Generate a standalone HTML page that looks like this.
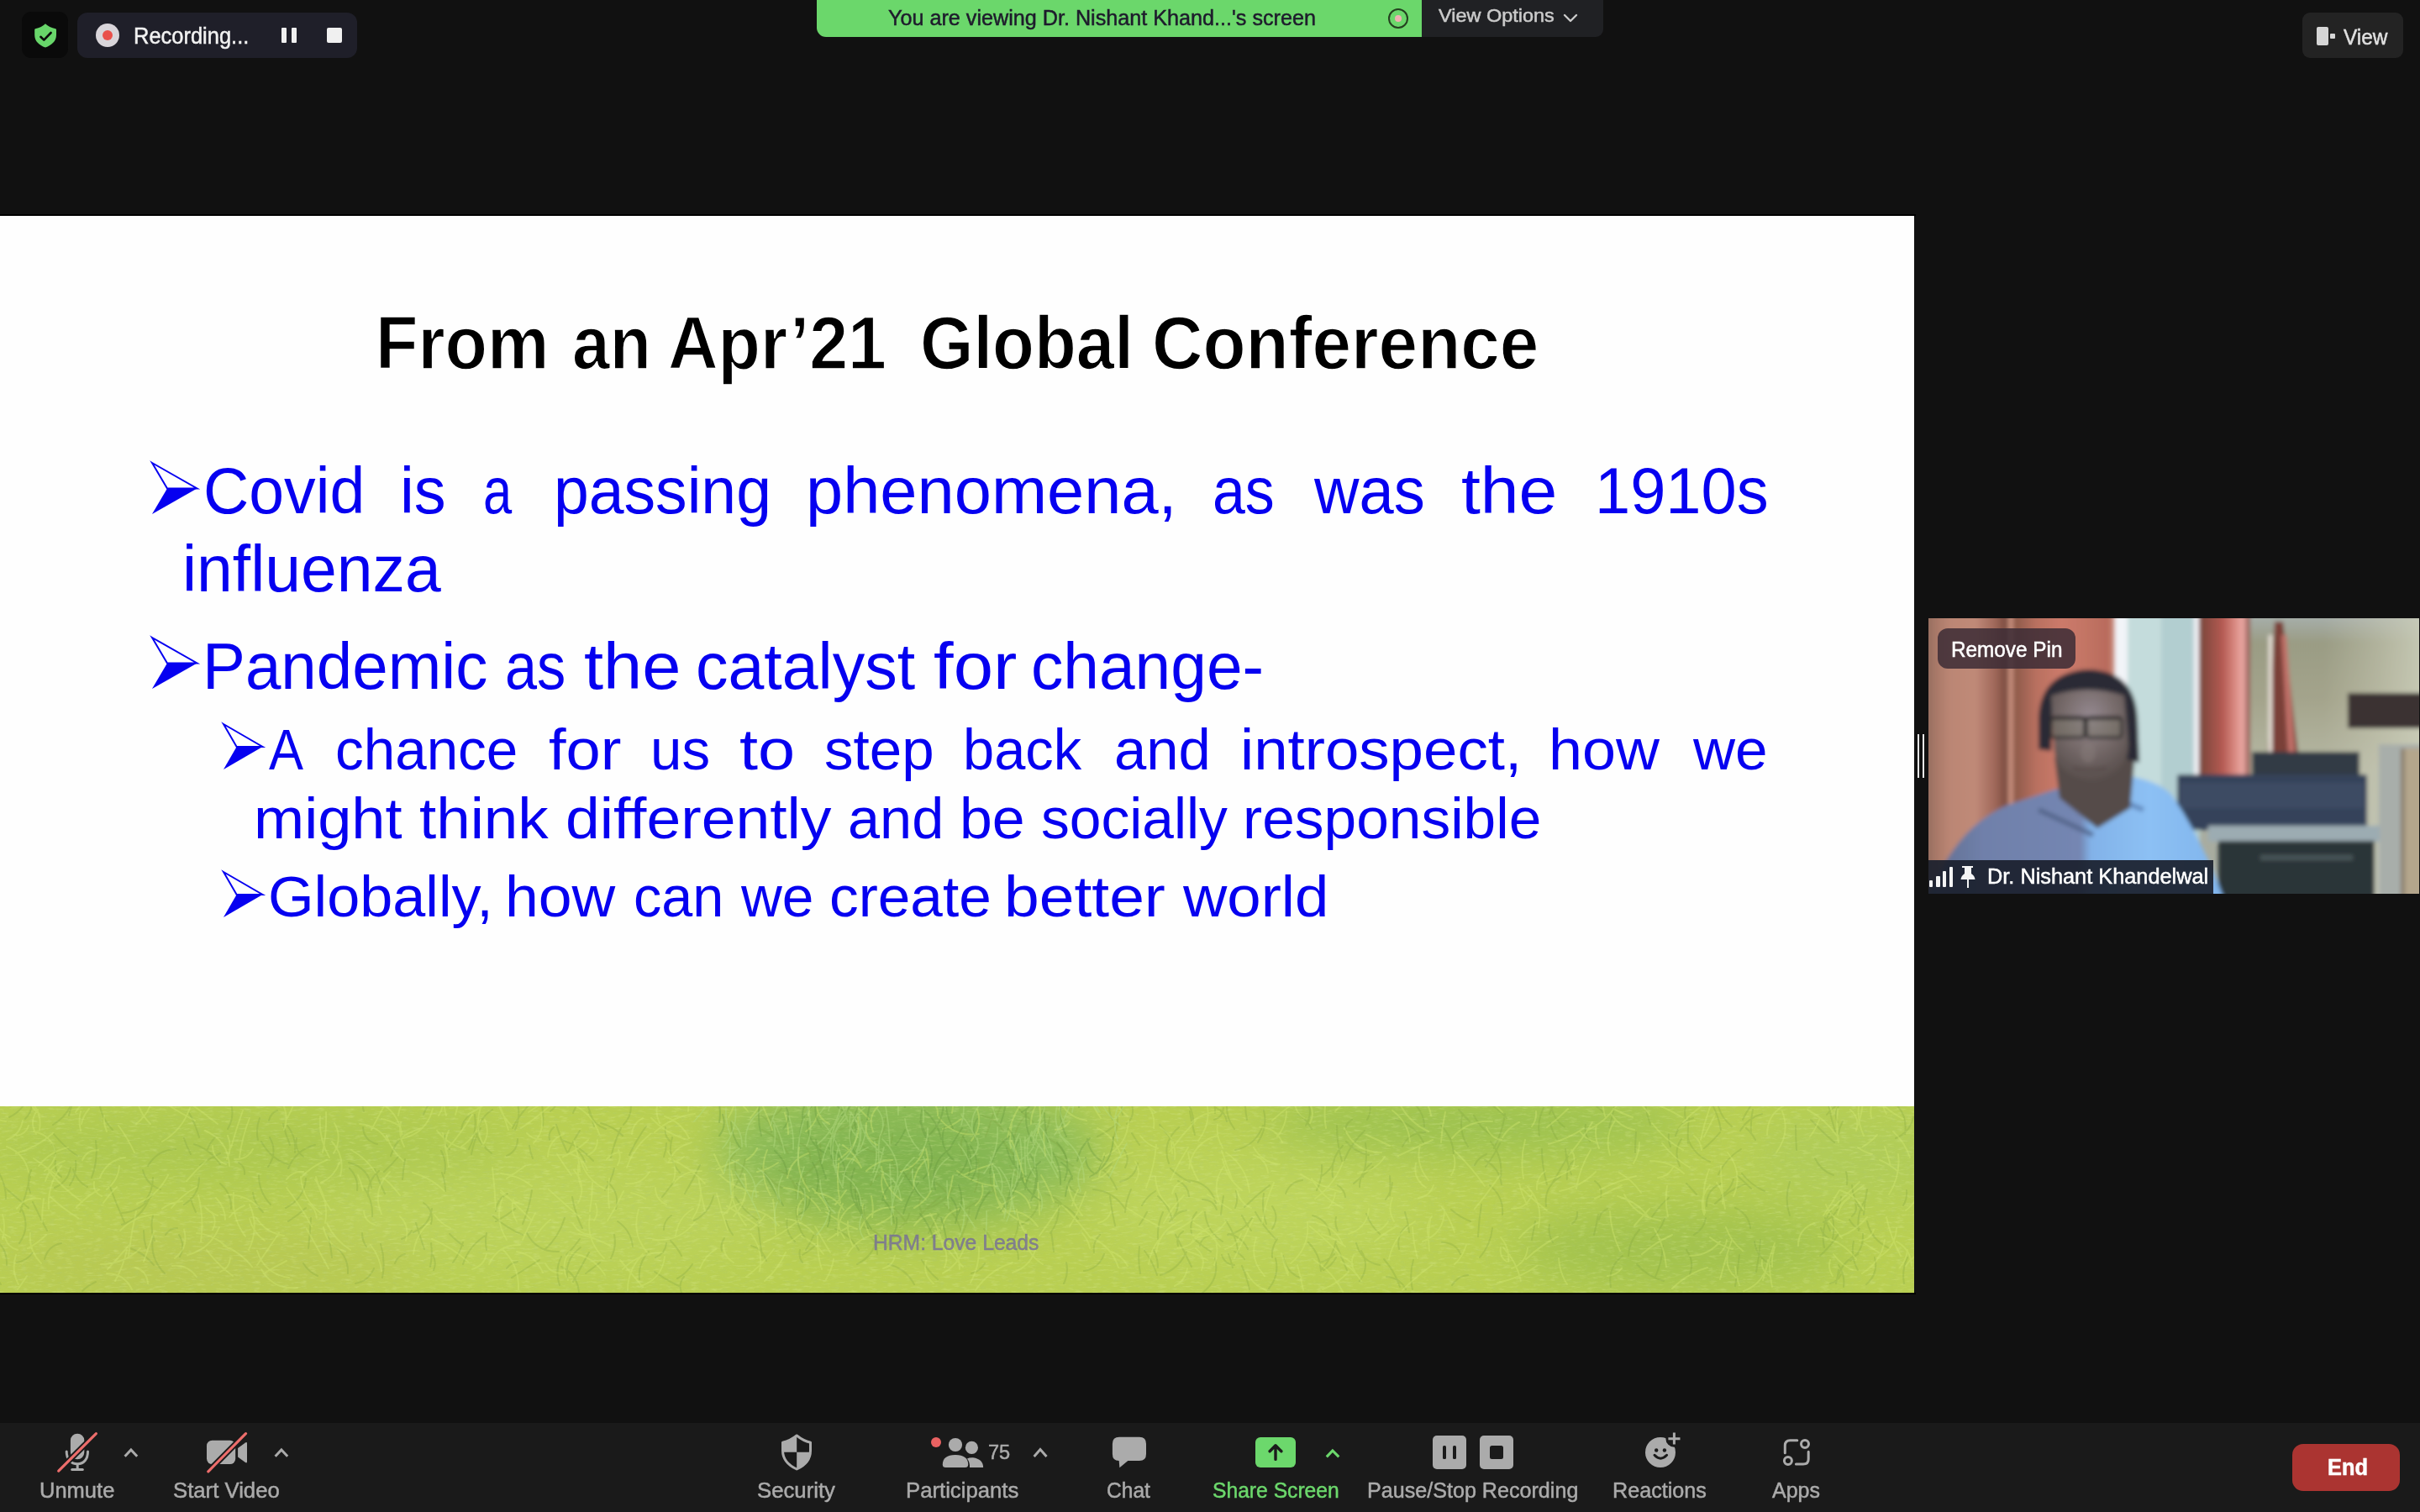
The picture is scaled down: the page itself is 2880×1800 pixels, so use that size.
<!DOCTYPE html>
<html><head><meta charset="utf-8">
<style>
html,body{margin:0;padding:0;width:2880px;height:1800px;overflow:hidden;background:#111111;}
*{box-sizing:border-box;}
body{font-family:"Liberation Sans",sans-serif;position:relative;}
.a{position:absolute;}
.t{position:absolute;white-space:nowrap;transform-origin:0 0;-webkit-text-stroke:0.5px currentColor;}
/* top bar */
#shieldbox{left:26px;top:14px;width:55px;height:55px;background:#0a0a0a;border-radius:11px;}
#recpill{left:92px;top:15px;width:333px;height:54px;background:#1f1f29;border-radius:12px;}
#banner{left:972px;top:0;width:720px;height:44px;background:#6bd76b;border-radius:0 0 0 11px;}
#viewopt{left:1692px;top:0;width:216px;height:44px;background:#202124;border-radius:0 0 9px 0;}
#viewbtn{left:2740px;top:15px;width:120px;height:54px;background:#232323;border-radius:9px;}
/* slide */
#slide{left:0;top:257px;width:2278px;height:1282px;background:#fefefe;overflow:hidden;}
#slideline{left:0;top:255px;width:2280px;height:2px;background:#000;}
#slidebot{left:0;top:1539px;width:2280px;height:2px;background:#000;}
.blue{color:#0a00f0;}
.w1,.w2,.tt{position:absolute;white-space:nowrap;transform-origin:0 0;color:#0600f0;}
.w1{font-size:77.5px;line-height:77.5px;}
.w2{font-size:68px;line-height:68px;}
.tt{font-size:88.5px;line-height:88.5px;font-weight:bold;color:#000;-webkit-text-stroke:1.5px #fefefe;paint-order:normal;}
/* toolbar */
#toolbar{left:0;top:1694px;width:2880px;height:106px;background:#1a1a1a;}
.lbl{color:#ababab;}
</style></head><body>

<!-- TOP BAR -->
<div class="a" id="shieldbox"></div>
<svg class="a" style="left:40px;top:28px" width="28" height="30" viewBox="0 0 28 30">
  <path d="M14 0.3 Q18.5 4.8 26.3 6.2 Q27 6.5 27 7.5 L27 13.5 C27 21 21.5 26 14 28.4 C6.5 26 1.2 21 1.2 13.5 L1.2 7.5 Q1.2 6.5 2 6.2 Q9.5 4.8 14 0.3 Z" fill="#68d66a"/>
  <path d="M8.4 15.8 L12.3 19.6 L20.6 11" stroke="#0b0b0b" stroke-width="2.6" fill="none" stroke-linecap="round" stroke-linejoin="round"/>
</svg>
<div class="a" id="recpill"></div>
<div class="a" style="left:114px;top:28px;width:28px;height:28px;border-radius:50%;background:#d9d5da;"></div>
<div class="a" style="left:122px;top:36px;width:12px;height:12px;border-radius:50%;background:#e9504b;"></div>
<div class="t" style="left:158.9px;top:29.3px;font-size:28px;line-height:28px;transform:scaleX(0.9097);color:#f2f2f2;">Recording...</div>
<div class="a" style="left:335px;top:33px;width:6px;height:18px;background:#f0f0f0;border-radius:1px;"></div>
<div class="a" style="left:347px;top:33px;width:6px;height:18px;background:#f0f0f0;border-radius:1px;"></div>
<div class="a" style="left:389px;top:33px;width:18px;height:18px;background:#f0f0f0;border-radius:2px;"></div>

<div class="a" id="banner"></div>
<div class="t" style="left:1057.0px;top:8.5px;font-size:25.5px;line-height:25.5px;transform:scaleX(0.9871);color:#1e1b2c;">You are viewing Dr. Nishant Khand...'s screen</div>
<div class="a" style="left:1652px;top:10px;width:24px;height:24px;border-radius:50%;border:2px solid #24401f;"></div>
<div class="a" style="left:1660px;top:18px;width:8px;height:8px;border-radius:50%;background:#f0b0b2;"></div>
<div class="a" id="viewopt"></div>
<div class="t" style="left:1712.2px;top:8.4px;font-size:22px;line-height:22px;transform:scaleX(1.0664);color:#cbcbcb;">View Options</div>
<svg class="a" style="left:1860px;top:16px" width="18" height="12" viewBox="0 0 18 12"><path d="M2 2 L9 9 L16 2" stroke="#cbcbcb" stroke-width="2.4" fill="none" stroke-linecap="round" stroke-linejoin="round"/></svg>

<div class="a" id="viewbtn"></div>
<div class="a" style="left:2757px;top:32px;width:14px;height:22px;background:#d6d6d6;border-radius:2px;"></div>
<div class="a" style="left:2773px;top:40px;width:6px;height:6px;background:#d6d6d6;border-radius:1px;"></div>
<div class="t" style="left:2788.7px;top:31.2px;font-size:26.5px;line-height:26.5px;transform:scaleX(0.9218);color:#e0e0e0;">View</div>

<!-- SLIDE -->
<div class="a" id="slideline"></div>
<div class="a" id="slide">
<svg class="a" style="left:0;top:1060px" width="2278" height="222" viewBox="0 0 2278 222">
  <defs>
   <filter id="gb" x="-20%" y="-50%" width="140%" height="200%"><feGaussianBlur stdDeviation="28"/></filter>
   <filter id="tex" x="0" y="0" width="100%" height="100%">
    <feTurbulence type="fractalNoise" baseFrequency="0.09 0.35" numOctaves="3" seed="7" result="n"/>
    <feColorMatrix in="n" type="matrix" values="0 0 0 0 0.75  0 0 0 0 0.88  0 0 0 0 0.35  0 0 0 2.2 -1.15" result="hl"/>
    <feTurbulence type="fractalNoise" baseFrequency="0.12 0.4" numOctaves="2" seed="21" result="n2"/>
    <feColorMatrix in="n2" type="matrix" values="0 0 0 0 0.42  0 0 0 0 0.58  0 0 0 0 0.2  0 0 0 2.2 -1.2" result="sd"/>
    <feMerge><feMergeNode in="sd"/><feMergeNode in="hl"/></feMerge>
   </filter>
  </defs>
  <rect x="0" y="0" width="2278" height="222" fill="#b9cf52"/>
  <g filter="url(#gb)">
   <ellipse cx="1080" cy="55" rx="230" ry="90" fill="#8cbc58"/>
   <ellipse cx="1060" cy="80" rx="150" ry="60" fill="#82b450"/>
   <ellipse cx="1760" cy="22" rx="260" ry="32" fill="#98c050"/>
   <ellipse cx="300" cy="50" rx="320" ry="40" fill="#acc850"/>
   <ellipse cx="650" cy="130" rx="280" ry="60" fill="#bcd25a"/>
   <ellipse cx="2000" cy="170" rx="200" ry="50" fill="#a2c24e"/>
   <ellipse cx="1500" cy="120" rx="200" ry="60" fill="#bed45c"/>
   <ellipse cx="250" cy="190" rx="260" ry="40" fill="#b8c852"/>
   <ellipse cx="2200" cy="60" rx="120" ry="50" fill="#b0cc58"/>
  </g>
  <rect x="0" y="0" width="2278" height="222" filter="url(#tex)" opacity="0.35"/>
  <g fill="none" stroke-linecap="round">
   <path d="M2178 211q9 -2 13 -11M1677 150q-1 -12 -5 -24M1324 39q7 -13 6 -27M2266 211q-3 -16 4 -31M82 11q3 -14 11 -27M2031 119q-1 -19 17 -27M741 35q-11 -11 -26 -15M414 199q1 -22 -18 -34M1738 176q-6 -14 -22 -14M367 169q2 -18 3 -36M1116 206q-12 -10 -19 -23M2011 200q6 -15 -4 -29M1649 111q7 -9 8 -20M378 202q-11 -5 -17 -15M2181 158q3 -15 -1 -30M1339 73q6 -11 -1 -21M1420 21q1 -23 -18 -35M436 167q-5 -7 -5 -16M516 195q4 -9 -1 -18M558 51q10 -19 7 -41M73 84q-9 -7 -7 -19M2174 10q12 -15 31 -20M1853 39q-6 -9 -8 -19M98 220q7 -7 16 -11M1402 166q-3 -11 6 -17M1022 171q-9 -17 -28 -25M1965 158q11 -10 16 -24M721 27q-15 -5 -20 -20M1333 90q18 -5 21 -22M590 137q12 -6 23 -15M320 17q2 -9 10 -12M1447 115q-8 -26 -35 -27M530 101q-0 -11 -4 -22M1823 159q2 -11 4 -22M11 13q13 -6 20 -19M549 27q2 -11 11 -17M1186 106q-8 -10 -7 -23M2065 214q3 -18 5 -37M1324 16q-7 -13 -1 -28M214 179q7 -13 -1 -26M1391 68q-9 -25 12 -43M1561 27q-6 -11 -16 -18M36 103q-5 -14 1 -27M1341 21q10 -9 6 -23M174 169q-3 -10 -3 -21M1055 169q5 -14 19 -19M183 189q-11 -14 -28 -20M56 148q-9 -17 -17 -34M815 104q10 -17 18 -34M1088 212q-10 -19 -31 -24M676 55q6 -14 14 -26M1547 204q-17 -7 -20 -26M811 222q-4 -11 3 -19M196 199q-18 -18 -14 -43M675 55q-8 -16 -13 -33M1194 29q-9 -14 -25 -18M219 117q18 -11 18 -32M1050 158q-9 -12 -23 -14M1306 36q13 -6 24 -16M2009 44q-1 -15 1 -30M1618 208q13 -17 2 -36M753 167q-2 -19 -18 -30M513 140q4 -16 -9 -25M1446 8q1 -16 -12 -26M1481 182q-5 -7 -12 -9M1381 201q22 -7 31 -28M1747 48q-11 -17 -7 -37M1832 35q-3 -17 5 -33M1290 106q-12 -1 -18 -12M7 110q0 -21 -13 -38M1105 151q6 -11 12 -22M63 22q17 -10 24 -29M1787 93q-3 -20 -20 -29M307 40q-3 -13 2 -26M24 126q7 -21 12 -42M871 101q12 -17 16 -38M1102 122q23 -6 33 -27M693 145q-9 -18 -12 -37M1915 25q5 -16 8 -33M1938 178q1 -18 13 -31M1042 55q-13 -2 -19 -13M1865 87q-2 -15 10 -24M1042 41q13 -10 12 -26M2100 101q-16 -7 -27 -21M227 57q-5 -9 -8 -19M811 178q-5 -10 -13 -18M912 184q-4 -14 -18 -18M1145 155q-4 -23 -21 -38M1980 208q-19 -5 -32 -20M1418 151q-3 -14 6 -25M2182 82q-15 -5 -22 -20M2188 33q1 -8 5 -15M2090 197q4 -19 5 -38M539 186q8 -11 12 -24M343 74q9 -22 32 -28M465 59q4 -13 14 -24M561 57q3 -17 11 -31M1749 18q-7 -7 -13 -14M1774 34q-13 -9 -20 -23M1750 137q-13 -5 -23 -14M1079 139q-7 -10 -16 -19M1339 122q-14 -21 -38 -23M1036 94q8 -16 25 -18M2267 33q4 -25 -16 -40M176 71q11 -19 33 -20M799 43q-9 -7 -7 -18M2213 146q-8 -3 -12 -11M1097 126q-6 -10 -0 -19M455 204q4 -20 -2 -40M1994 35q5 -16 21 -21M247 51q3 -8 9 -14M1418 191q-9 -19 -19 -38M2089 40q-4 -8 -11 -14M479 87q1 -12 3 -24M907 178q-3 -19 -5 -39M648 171q17 -15 24 -38M1592 148q-4 -8 -2 -16M443 131q1 -18 -9 -33M1601 108q-1 -9 -9 -14M1903 135q1 -9 10 -13M1448 123q-4 -12 -17 -12M2049 106q11 -7 14 -19M1597 65q-6 -20 -6 -42M946 161q-12 -11 -9 -27M1600 64q8 -20 24 -35M1226 90q-16 -5 -24 -19M1759 155q1 -19 4 -38M788 108q7 -9 14 -18M438 107q-1 -18 13 -30M1378 192q-0 -11 -5 -21M2016 153q12 -7 14 -20M682 8q8 -20 24 -33M727 61q4 -18 12 -35M955 186q-5 -7 -3 -15M343 137q11 -7 21 -16M2083 145q-2 -17 -18 -24M345 70q-23 -7 -34 -28M1603 195q-6 -15 -13 -30M535 51q-7 -6 -6 -16M1416 90q-13 -6 -23 -16M1082 87q6 -9 12 -18M1862 25q-20 -15 -16 -41M1611 92q11 -10 23 -20M1184 175q-2 -17 -13 -29M504 10q5 -16 21 -21M733 122q5 -19 -10 -32M233 126q-4 -8 -6 -16M319 72q12 -17 2 -35M809 79q-16 -18 -9 -42M1786 84q3 -23 -12 -42M2041 116q16 -16 37 -24M1908 7q-13 -13 -30 -18M1964 22q-5 -15 -7 -30M955 177q9 -5 16 -12M2202 184q16 -12 15 -32M92 59q-16 -11 -28 -26M2071 29q9 -15 26 -20M433 6q-4 -14 -0 -27M1484 16q-3 -15 -2 -30M2084 32q-1 -14 2 -28M2218 129q1 -15 4 -30M2166 178q13 -12 22 -26M291 81q1 -9 -7 -14M1453 129q1 -11 3 -22M964 63q1 -13 -11 -19M1871 140q7 -6 6 -14M2216 124q-11 -13 -12 -30M1622 84q6 -20 3 -40M1267 121q-9 -13 -23 -17M956 115q-6 -20 -21 -36M2184 30q-5 -16 -8 -32M2194 215q2 -14 -6 -26M1586 84q-3 -22 12 -37M1514 146q9 -14 0 -27M1841 93q-6 -21 -6 -42M1474 175q-3 -21 -15 -39M913 14q16 -3 21 -20M826 136q18 -9 23 -29M742 22q13 -14 7 -32M1013 25q6 -4 13 -9M1627 16q7 -12 1 -25M2211 195q-9 -16 -5 -34M1395 41q-7 -10 -15 -19M1654 106q1 -12 -0 -23M551 188q7 -22 28 -35M1848 162q-6 -10 -4 -21M1966 132q8 -13 20 -23M1077 84q8 -7 12 -16M2107 188q-17 -9 -19 -27M478 158q8 -3 12 -10M449 45q-16 -4 -17 -20M1999 71q-8 -17 2 -32M2183 43q-15 -13 -28 -27M2187 19q-5 -10 1 -19M1840 119q-3 -23 17 -35M2028 50q11 -9 19 -19M1057 48q6 -7 5 -15M351 55q2 -18 -9 -32M1469 189q-12 -1 -15 -12M271 27q11 -19 -0 -38M2221 212q15 -13 10 -32M1669 48q8 -17 27 -17M1455 161q-19 -12 -21 -35M1681 218q-4 -18 1 -35M145 141q23 -8 32 -30M2045 81q9 -19 27 -30M1290 196q18 -3 24 -20M1302 174q-2 -12 7 -21M425 100q2 -15 -9 -26M761 206q-2 -19 11 -33M2178 148q-4 -7 -6 -15M959 171q6 -9 10 -19M2061 24q-17 -14 -18 -36M1507 140q-6 -18 -3 -36M1145 57q-5 -16 6 -28M529 80q3 -14 -4 -27M590 125q1 -14 14 -21M2186 207q5 -22 25 -31M238 70q11 -8 24 -14M1570 186q11 -2 18 -10M866 73q2 -10 9 -17M585 56q-13 -10 -19 -24M948 110q1 -24 -21 -34M395 180q-1 -12 -4 -24M1309 75q10 -0 15 -9M2019 105q-6 -7 -12 -13M1071 144q9 -6 11 -16M1673 218q-7 -14 -23 -15M1156 199q11 -3 16 -12M322 117q-14 -15 -14 -35M1793 14q-11 -11 -24 -21M689 221q-2 -21 -21 -30M2130 130q-7 -20 -0 -40M634 62q-3 -7 -4 -15M2074 16q8 -18 23 -31M666 213q-6 -18 2 -34M109 85q8 -21 5 -44M2006 15q-3 -13 4 -24M872 153q-6 -8 -8 -17M1497 43q12 -18 7 -38M2204 131q7 -6 4 -15M1485 170q-7 -15 -23 -18M1396 133q6 -8 16 -9M1642 189q-22 -4 -28 -26M65 60q3 -8 -3 -15M2048 28q-3 -18 -12 -33M938 56q-11 -19 -31 -28M1239 12q2 -12 12 -20M492 150q19 -8 22 -28M1 212q-10 -14 -10 -31M1575 195q10 -5 15 -15M568 28q4 -15 18 -24M646 23q2 -20 -5 -39M665 173q-26 1 -38 -22M707 24q-3 -15 -9 -28M808 214q-15 -7 -29 -17M1469 27q-10 -13 -9 -30M1422 34q-4 -14 -6 -28M345 46q-5 -12 -8 -25M457 78q9 -8 17 -18M1073 76q-9 -1 -11 -10M262 69q-11 -17 -31 -24M470 187q3 -9 12 -11M1283 134q-10 -15 -27 -20M1694 43q-10 -21 -33 -27M184 160q-6 -15 -2 -30M1761 180q13 -15 15 -35M197 153q5 -8 14 -8M1487 218q-3 -14 -9 -28M1917 215q-4 -23 14 -37M2035 66q-19 -8 -26 -27M442 97q-3 -24 -27 -30M622 140q8 -19 11 -40M512 191q3 -14 1 -28M727 181q7 -14 4 -28M1519 159q-15 -15 -25 -33M1467 192q-2 -8 -5 -16M918 31q-0 -13 -12 -20M2248 169q-21 -10 -26 -32M1573 194q13 -14 17 -34M888 99q-15 -14 -13 -34M1460 18q-2 -12 -13 -16M579 171q-2 -10 0 -20M191 99q-17 -6 -21 -23M655 6q9 -7 10 -19M2138 52q-1 -15 -1 -29M2185 211q2 -8 3 -16M1481 120q14 -14 30 -26M1892 42q-7 -9 -5 -20M1242 32q7 -8 7 -19M1392 137q15 -14 7 -33M1356 141q5 -7 9 -15M2177 158q-8 -5 -10 -13M1356 46q-5 -7 -9 -14M1378 158q-1 -17 6 -32M1207 58q-9 -8 -14 -18M1642 152q-11 -10 -16 -24M8 189q1 -22 -18 -33M930 97q-15 -8 -23 -24M1728 213q7 -11 19 -12M1470 52q24 -5 33 -29M806 205q11 -6 18 -17M682 209q9 -17 19 -35M1254 173q-1 -11 -3 -23M1339 126q1 -14 7 -27M2265 118q5 -8 4 -18M1554 23q8 -13 3 -27M609 204q17 -11 33 -21M1214 142q20 -11 24 -34M20 186q12 -2 19 -12M2212 148q-3 -20 8 -37M1514 180q-1 -12 6 -22M603 193q5 -7 13 -8M1788 129q2 -21 -15 -35M1336 10q-3 -10 3 -18M706 65q-15 -17 -37 -25M959 95q-3 -9 2 -17M1212 182q-0 -15 -11 -25M2084 98q-8 -8 -16 -15M622 153q-19 -8 -35 -22M603 59q13 -6 13 -20M1445 16q10 -3 11 -14M780 180q12 -5 13 -17M172 114q10 -13 10 -29M1946 55q0 -12 1 -24M1441 173q-11 -7 -20 -15M65 97q16 -7 19 -24M1359 118q6 -11 16 -17M1461 153q19 -4 29 -20M1583 153q-3 -18 -21 -23M1329 99q-6 -15 -18 -25M1768 72q10 -13 17 -28M34 121q-14 -12 -28 -24M1988 48q-3 -7 -2 -15M901 135q-16 -10 -26 -27M1327 142q-4 -17 -6 -35M1844 9q6 -20 25 -30M1530 104q5 -14 20 -16M610 26q8 -16 21 -29M959 158q-13 -17 -11 -38M313 126q-10 -9 -12 -23M1573 83q11 -7 15 -18M1148 123q17 -10 33 -22M749 58q8 -18 20 -34M988 35q10 -6 21 -12M1431 222q21 -16 15 -41M237 37q-4 -15 -12 -29M83 94q9 -13 7 -29M1695 24q-0 -16 -12 -27M1510 217q13 -16 8 -36M1395 135q-4 -17 -17 -28M1044 176q0 -16 -13 -24M1207 37q5 -22 24 -35M104 96q-13 -7 -17 -21M859 172q-2 -8 3 -15M1755 70q4 -9 14 -13M1601 30q-0 -10 8 -14M1665 170q-4 -18 11 -29M1629 58q-16 -3 -27 -16M1567 100q7 -14 6 -30M1186 12q7 -19 21 -34M1092 134q11 -15 27 -26M1415 107q-1 -13 -13 -18M1470 121q4 -10 1 -20M720 100q8 -12 11 -26M675 205q-3 -23 16 -37M53 182q4 -16 20 -19M1778 50q10 -19 13 -41M790 147q0 -11 9 -17M144 127q25 -1 38 -23M654 40q-2 -9 5 -15M1128 105q-6 -8 -14 -14M1730 57q-1 -20 -15 -34M423 211q16 -3 22 -18M697 199q8 -6 17 -13M1250 151q11 -15 10 -33M1173 36q6 -15 10 -31M361 60q-11 -8 -8 -22M948 92q15 -14 29 -29M1846 94q11 -19 22 -38M696 66q-3 -8 -9 -14M1905 108q3 -12 -7 -19M1269 62q-5 -16 -21 -23M1428 166q2 -10 11 -12M1026 111q-4 -6 -10 -12M1666 215q-6 -18 -19 -33M1196 172q15 -14 16 -35M340 121q22 -11 24 -35M1103 163q6 -9 16 -12M1357 199q-3 -16 -1 -32M1141 160q11 -18 13 -39M790 60q3 -8 3 -16M1160 102q7 -18 4 -38M1266 211q6 -12 3 -25M674 177q9 -9 16 -19M1277 71q-10 -6 -20 -12M1618 96q0 -17 14 -28M1897 153q3 -12 5 -24M148 138q-9 -20 -17 -42M275 122q1 -18 -13 -30M613 28q10 -23 -3 -44M1377 201q-5 -16 -15 -29M2171 168q-5 -23 8 -44M458 104q-7 -14 -12 -29M2198 93q1 -8 -1 -15M551 166q-8 -6 -16 -14M2170 138q19 -9 21 -30M2256 38q17 -7 21 -25M1970 203q8 -18 9 -37M134 28q-12 -12 -15 -28M30 15q10 -10 7 -24M1572 196q-1 -20 -15 -34M505 170q-5 -15 -10 -31M1020 188q20 -10 23 -31M1230 19q-15 -12 -28 -27M978 64q-2 -10 -2 -21M1489 148q-6 -8 -11 -18M928 45q-0 -18 -12 -31M1870 81q-6 -15 -7 -30M23 163q14 -20 2 -42" stroke="#7c9e3c" stroke-width="2" stroke-opacity="0.25"/>
   <path d="M306 189q13 -19 26 -38M1024 146q11 -26 40 -26M1904 99q21 -10 43 -16M1644 55q-32 -0 -44 -29M58 122q-2 -28 15 -51M962 11q2 -13 4 -26M531 55q-3 -13 3 -26M49 187q-15 -15 -13 -36M2261 192q8 -9 9 -21M1620 208q-9 -15 -24 -23M691 133q-19 -17 -38 -34M1342 12q-10 -9 -18 -20M394 124q-13 -18 -18 -40M1000 115q-5 -23 -2 -47M1116 11q1 -12 -9 -17M1351 90q8 -12 -0 -24M1755 122q16 -19 30 -40M2170 130q10 -14 19 -30M2180 6q-8 -26 -33 -33M1687 181q-5 -18 -6 -37M128 194q13 -14 26 -29M1105 82q1 -16 -3 -31M1395 104q2 -10 12 -15M1331 192q-8 -25 -32 -36M582 188q11 -24 37 -23M33 169q12 -6 22 -16M785 20q-6 -12 -2 -24M622 159q7 -16 15 -32M54 89q5 -18 23 -24M2050 116q2 -14 -7 -25M47 9q-11 -7 -12 -20M1605 152q22 -7 24 -30M1817 117q-6 -12 -9 -25M1312 75q15 -15 36 -20M2205 195q-14 -6 -23 -19M2140 166q0 -20 19 -27M2002 13q-21 -12 -44 -21M391 193q-13 -24 -26 -47M861 80q-6 -11 -11 -23M442 28q10 -19 20 -37M741 194q20 -20 47 -20M747 219q0 -25 18 -43M1536 187q23 -19 20 -49M1565 110q23 -17 33 -43M193 42q24 -14 33 -40M1367 188q2 -16 12 -29M1976 136q-30 -5 -43 -31M1256 28q11 -1 17 -10M1795 185q2 -16 -9 -29M861 129q9 -11 22 -14M2029 127q-5 -27 5 -52M1793 185q-9 -6 -7 -17M262 197q11 -4 12 -16M959 30q10 -7 14 -20M234 203q-11 -15 -29 -13M670 60q17 -7 30 -20M90 7q16 -22 26 -48M1025 73q-5 -11 -17 -11M2209 29q5 -15 -7 -25M1237 154q13 -17 24 -35M700 58q11 -5 11 -18M1020 146q-20 -7 -37 -20M699 76q-6 -16 -22 -20M690 78q-1 -19 -7 -37M558 9q12 -6 23 -14M162 21q18 -14 20 -36M1124 192q5 -12 -0 -24M176 211q-1 -15 -15 -19M1871 74q6 -11 -1 -22M669 199q-14 0 -20 -12M720 201q-14 -23 -40 -26M1700 155q-4 -13 4 -24M1628 150q16 1 24 -13M1841 124q-15 -11 -29 -25M901 78q14 -3 25 -11M949 129q-1 -11 7 -19M285 61q3 -24 12 -47M1395 56q-1 -9 -1 -18M1478 100q-18 -14 -23 -37M1128 109q4 -13 6 -26M2066 204q-13 -10 -10 -26M163 116q25 -10 37 -34M2011 73q-19 -11 -33 -29M1598 165q-8 -21 -31 -26M2187 129q3 -13 14 -20M1297 169q-2 -10 -9 -18M793 117q-13 -6 -13 -20M2235 180q21 -11 22 -35M2186 35q-14 -20 -35 -31M1596 102q-26 -7 -48 -21M1829 99q-1 -14 10 -22M2070 213q-4 -11 -5 -22M269 69q-16 -6 -16 -22M432 100q-2 -9 -6 -18M1903 50q-6 -14 -3 -28M1334 59q-7 -23 -28 -33M2218 123q-9 -17 -28 -23M1300 88q15 -3 23 -16M269 167q-14 -14 -35 -16M2218 35q-8 -17 -6 -36M1146 82q17 -8 35 -13M1024 71q-7 -15 -21 -25M1121 146q2 -19 21 -24M632 135q-18 -18 -36 -35M2248 105q14 -22 11 -48M2250 71q-3 -12 -7 -23M819 6q1 -16 6 -32M1962 132q-14 -19 -37 -25M1122 167q-4 -21 -15 -39M927 142q-14 -17 -36 -20M1928 172q-11 -22 -12 -47M603 159q-15 -24 -5 -50M1898 110q16 -8 32 -16M1697 97q-16 -11 -12 -29M1155 210q11 -20 10 -42M1378 50q-13 -4 -21 -15M171 185q6 -18 12 -35M1678 42q-2 -23 -21 -37M615 137q-8 -12 -4 -26M1799 193q17 -6 19 -24M1610 188q-7 -7 -16 -11M721 99q-23 -11 -30 -35M1426 41q19 -25 7 -53M1659 137q-8 -13 -2 -28M315 160q-14 -10 -18 -26M1636 161q11 -10 24 -17M1122 27q12 -4 22 -12M2025 52q-1 -11 -9 -17M2196 138q-17 -4 -23 -21M1578 26q-3 -16 0 -33M384 55q5 -24 4 -48M483 160q5 -17 -7 -29M2265 15q-22 -11 -36 -30M873 131q20 -22 13 -50M1728 38q19 -22 48 -20M1514 17q12 -11 25 -20M1913 202q11 -1 17 -9M98 64q5 -12 19 -12M1452 167q-13 -18 -32 -29M888 142q-18 -22 -18 -51M137 208q10 -18 14 -37M1276 118q2 -10 7 -19M454 196q-2 -17 -13 -31M1693 161q26 -10 26 -38M344 204q-29 -4 -38 -32M208 181q17 -13 11 -34M91 120q12 -13 27 -21M1612 196q-6 -9 -1 -19M1823 24q6 -8 5 -18M713 33q-8 -25 -32 -35M692 97q-5 -13 -4 -27M771 175q-20 -23 -11 -52M1487 102q-3 -30 -28 -47M1598 121q-24 -12 -37 -35M358 85q13 -14 31 -21M1310 14q-15 -20 -17 -45M680 82q-9 -12 -17 -25M1199 37q5 -26 21 -47M157 218q-9 -19 -30 -19M2209 182q-17 -23 -45 -27M307 119q-16 -14 -37 -14M1601 167q-12 -10 -28 -15M917 106q-15 -26 -4 -54M338 154q-21 -3 -33 -21M937 163q9 -5 16 -11M605 28q-4 -13 -9 -26M179 21q-19 -19 -17 -46M1963 10q-9 -14 -24 -21M646 198q-9 -21 -31 -25M969 152q-13 -16 -34 -18M1653 182q6 -29 31 -45M1701 172q-2 -19 1 -37M2011 178q22 0 36 -17M1044 46q-16 -8 -13 -26M273 71q-1 -30 -29 -42M1237 129q-0 -19 -2 -38M1865 212q-9 -14 -10 -31M688 115q11 -21 -5 -39M371 143q-13 -24 -30 -46M839 92q-18 -20 -43 -30M2047 206q6 -24 14 -47M1813 86q-4 -23 2 -46M1039 30q-7 -17 6 -30M392 61q-13 -23 -11 -49M2273 61q-6 -18 -20 -31M988 174q-9 -15 -18 -31M2213 160q13 -1 17 -13M522 11q9 -13 1 -27M909 162q23 -10 41 -26M2268 124q18 -13 14 -35M2209 27q8 -18 8 -38M270 63q7 -14 1 -28M1954 176q16 -14 36 -23M1523 69q-21 -2 -31 -20M1945 28q-17 -3 -27 -18M1186 95q-26 -2 -47 -18M1122 199q18 -10 25 -29M768 110q-8 -5 -17 -7M2109 215q-3 -14 -3 -28M1731 188q10 -9 14 -23M938 33q-0 -13 -4 -25M2187 121q14 -15 31 -27M637 156q7 -12 18 -21M1072 78q22 -7 28 -29M1581 121q7 -8 8 -18M1469 181q11 -23 22 -46M752 33q1 -13 13 -19M1227 158q-15 -14 -17 -35M454 128q-12 -28 10 -50M46 71q13 -17 35 -22M1551 219q-3 -15 -7 -30M53 77q10 -7 13 -19M1552 14q-10 -6 -11 -18M722 63q7 -9 18 -8M910 208q16 -14 25 -34M623 117q-15 -4 -27 -14M1831 144q6 -27 -13 -48M923 152q0 -21 -3 -41M1220 90q-6 -25 -16 -49M123 115q7 -10 16 -19M1244 59q-2 -14 -2 -28M919 28q-5 -15 -12 -30M1241 188q-23 -14 -20 -40M702 153q-13 -1 -20 -13M2003 52q-22 -12 -37 -32M2024 40q5 -24 14 -47M268 135q-0 -15 -11 -26M1375 7q-20 -18 -46 -28M865 127q12 -24 5 -50M1364 97q10 -25 12 -51M121 107q-11 -5 -9 -17M96 29q-3 -12 -0 -23M617 218q1 -28 -19 -48M1867 58q16 -18 28 -39M815 39q-23 -7 -40 -25M2004 80q-17 -15 -40 -15M127 99q14 -11 15 -28M1005 157q-14 -20 -2 -41M1533 198q-4 -11 -8 -23M777 159q31 3 50 -21M873 186q-12 -7 -12 -21M765 215q-14 -16 -27 -32M1073 112q-21 -15 -24 -40M1004 123q-12 -18 -34 -20M341 87q7 -10 20 -9M417 171q-19 -12 -28 -32M354 216q-29 3 -43 -22M903 143q-18 -13 -38 -24M890 6q-17 -22 -44 -18M1509 79q-2 -16 -17 -21M2188 43q-3 -20 -1 -40M1810 208q-5 -23 -21 -40M1489 121q-14 -6 -17 -21M1467 89q-7 -18 -13 -36M2228 57q-9 -2 -17 -8M633 95q-16 -13 -37 -15M725 121q-2 -17 -0 -35M382 91q16 -7 22 -24M820 38q-9 -19 -29 -26M1417 164q8 -14 23 -20M796 66q7 -18 27 -23M576 48q-12 -23 -4 -47M978 194q-6 -19 -5 -39M446 141q-12 -4 -13 -16M1700 88q-16 -19 -10 -42M1227 21q-0 -14 8 -26M1507 219q-16 -6 -23 -21M1616 80q21 -3 32 -20M476 106q-9 -12 -20 -21M1401 169q15 -1 24 -13M719 181q-22 -21 -17 -51M1945 142q9 -10 18 -20M277 202q-18 -13 -31 -31M2103 34q-0 -27 25 -37M275 49q6 -22 14 -44M1398 63q3 -24 -17 -38M1146 191q-19 -19 -33 -43M620 26q20 -13 38 -30M1034 15q-9 -10 -18 -18M2106 202q-11 -7 -9 -19M963 101q-17 -23 -12 -52M1161 118q11 -10 8 -24M2236 174q-9 -5 -17 -11M1900 43q-12 -3 -20 -13M98 114q-23 -16 -40 -37M2262 178q-12 -22 -17 -46M2063 107q12 -28 -7 -52M1087 98q-0 -22 17 -36M1342 190q-7 -13 -22 -18M1767 95q-16 -23 -36 -42M259 130q-9 -3 -15 -10M839 125q-5 -20 -8 -41M1445 189q7 -17 -0 -35M8 40q16 -6 19 -23M338 28q6 -15 -1 -30M2268 190q13 -20 37 -17M1437 183q-12 -7 -25 -11M1307 139q12 -3 15 -14M609 23q-11 -10 -15 -24M480 65q-14 -12 -20 -30M1990 217q18 -18 42 -25M2109 191q-1 -12 3 -23M1703 11q-2 -17 -17 -24M93 133q-18 -11 -34 -26M2217 48q10 -6 17 -14M279 63q15 1 22 -12M763 214q25 -9 28 -35M21 218q6 -8 11 -16M21 171q-12 -3 -15 -15M1203 50q-2 -14 1 -29M893 147q11 -7 18 -18M676 207q-10 -18 2 -34M47 28q4 -24 -16 -38M985 159q12 -9 26 -16M1598 180q-18 -20 -39 -37M1254 114q-6 -17 -15 -32M1953 103q-10 -15 -26 -24M1195 127q-14 -21 -12 -46M707 136q6 -9 2 -20M529 101q-16 -16 -38 -22M1426 88q-9 -15 -12 -32M1788 7q-18 -16 -26 -38M34 78q-5 -22 -26 -30M475 23q-10 -6 -21 -8M292 155q-17 -23 -14 -52M2192 157q-7 -10 -15 -20M1308 84q3 -14 6 -28M1051 193q12 -3 14 -15M1385 139q10 -19 24 -33M479 38q-3 -31 -31 -45M3 158q4 -15 0 -29M71 85q-15 -12 -31 -23M723 136q11 -17 19 -35M629 7q12 -8 25 -16M1142 194q-0 -28 -26 -37M603 86q11 -7 22 -15M1165 33q-30 4 -48 -20M7 18q-26 -4 -34 -29M20 122q10 -15 28 -12M481 48q-7 -14 -4 -29M532 51q17 -19 30 -41M1031 77q13 -13 31 -13M1458 170q14 -4 19 -18M223 177q27 -7 38 -33M342 14q7 -13 11 -27M1008 177q12 -20 34 -25M1700 30q-26 -12 -37 -39M652 60q1 -20 19 -27M574 47q10 -14 3 -31M1502 139q4 -25 14 -48M557 185q-19 -17 -43 -27M259 21q-19 -15 -38 -28M2098 207q6 -22 14 -44M802 91q13 -15 33 -14M383 128q-23 -16 -25 -44M1043 141q11 -4 20 -12M536 145q-11 -5 -19 -16M976 124q-15 -24 -43 -27M1559 20q7 -13 -2 -25M1654 47q-14 -7 -28 -13M1983 191q-2 -24 -14 -45M779 31q21 -19 48 -22M1398 214q13 -7 15 -21M745 92q18 2 28 -14M1589 6q7 -8 17 -14M2028 36q6 -12 12 -24M2053 122q-5 -25 -5 -51M1985 131q-4 -18 -1 -36M987 21q-13 -6 -15 -20M474 40q13 -10 28 -14M1389 152q24 -9 42 -27M447 79q-11 -17 -29 -27M2245 9q-9 -15 1 -30M119 85q8 -21 30 -24M726 166q-17 -9 -37 -14M2028 129q-7 -20 7 -35M143 148q19 -20 46 -19M746 73q8 -24 28 -40M1111 211q-13 -11 -9 -27M983 206q7 -11 9 -24M1288 130q-13 -16 -17 -37M801 91q7 -20 -6 -37M902 102q-26 -2 -45 -20M1664 59q21 -10 41 -19M1298 157q-15 -21 -34 -39M1133 8q4 -20 -6 -38M377 133q-1 -11 -10 -17M997 154q-1 -25 20 -38M1727 82q7 -11 3 -24M2174 128q19 -19 39 -38M19 56q25 -7 44 -24M1161 219q16 -24 44 -33M2258 77q-9 -8 -21 -13M702 125q3 -17 3 -34M387 139q5 -28 -12 -52M644 39q-10 1 -17 -7M866 147q-8 -21 -13 -43M1856 101q25 -5 43 -23M222 89q11 -13 24 -25M1943 13q-12 -4 -23 -10M888 203q19 -14 33 -33M411 173q-22 -7 -26 -29M2114 55q17 -23 7 -49M232 17q-16 -8 -31 -18M1156 41q14 -17 7 -37M1688 109q14 -2 18 -15M1392 54q14 -19 31 -37M1998 27q7 -10 19 -10M853 75q13 -6 26 -11M1015 166q-7 -14 -6 -29M1715 43q1 -18 5 -36M1226 121q-4 -17 -21 -21M1273 143q12 -19 19 -41M1054 110q-8 -16 -3 -32M549 48q18 -12 23 -32M2062 170q-15 -4 -27 -14M824 134q13 -19 9 -41M1944 68q7 -12 7 -25M1526 43q-8 -18 -27 -18M1376 174q4 -28 31 -38M1393 88q9 -20 21 -39M1841 25q13 -10 25 -22M1669 219q16 -16 35 -30M1235 143q-15 -21 -40 -18M475 39q32 -5 40 -36M273 132q7 -9 18 -14M1808 157q10 -12 23 -19M397 56q11 -18 1 -36M204 121q12 -15 30 -25M314 199q13 -8 27 -15M1205 198q24 -8 29 -34M12 156q-10 -4 -14 -14M1816 182q17 -16 38 -27M239 161q4 -28 -3 -55M1520 36q11 -13 11 -30M937 85q4 -22 25 -29M542 10q6 -21 5 -43M1293 17q-29 -5 -34 -34M980 176q-10 -14 -26 -21M1505 202q-19 -20 -10 -46M1035 154q-8 -17 -8 -37M1916 58q-7 -22 6 -41M43 33q-9 -15 2 -29M153 178q3 -27 9 -53M1373 26q3 -22 -16 -35M1465 123q-14 -9 -28 -18M1088 164q16 -6 30 -17M1973 85q12 -1 18 -12M253 147q6 -11 -1 -21M534 72q-2 -20 -7 -40M893 14q13 -15 21 -34M998 63q28 -17 23 -50M1088 121q13 -7 20 -20M1038 132q2 -12 -1 -25M1731 150q-5 -16 -15 -30M1088 142q9 -13 26 -14M2216 199q23 -14 27 -40M1799 122q18 -0 24 -17M2275 190q-1 -20 -18 -29M1235 32q8 -28 -5 -54M1418 19q14 -12 33 -13M2190 155q19 -7 32 -23M1379 143q-20 -10 -38 -22M1392 120q-16 -14 -17 -36M127 30q-4 -9 -3 -19M1787 40q-13 -2 -18 -15M804 155q2 -22 21 -33M1316 59q26 -13 27 -42M50 138q-0 -14 2 -28M1843 45q23 -6 42 -19M1876 98q4 -25 17 -46M2075 220q26 -10 29 -37M833 193q6 -15 19 -23M1574 218q18 -7 31 -21M2047 175q7 -7 8 -16M1598 221q-12 -24 -34 -38M867 13q14 -22 5 -46M300 191q-13 -17 -34 -25M994 117q7 -8 13 -17M405 83q6 -23 -10 -41M987 125q-7 -15 -20 -27M2154 36q7 -9 11 -20M1455 49q-8 -13 -6 -27M1890 28q22 -10 35 -31M1782 210q26 -5 47 -20M2074 172q-14 -11 -20 -28M1829 93q26 -8 49 -22M296 171q13 -27 1 -54M531 11q-8 -26 10 -47M1533 201q-5 -10 -6 -20M97 21q2 -10 9 -18M1224 140q-26 -7 -38 -32M1430 195q6 -16 -7 -26M1445 157q-11 -12 -28 -11M735 70q5 -9 1 -18M1788 37q7 -12 20 -18M461 41q-11 -18 -33 -20M1415 74q4 -30 33 -39M492 176q2 -23 20 -39M1452 116q-11 -25 6 -47M160 55q-8 -17 -19 -32M22 212q-9 -17 -3 -35M554 51q-21 -5 -34 -22M796 67q10 0 18 -7M2227 14q-2 -11 2 -21M562 194q14 -4 17 -18M1420 154q25 5 39 -17M66 54q-5 -20 -26 -24M20 35q11 -2 14 -12M193 122q10 -8 24 -9M590 123q-1 -25 -4 -50M635 44q14 -15 9 -35M474 11q1 -11 9 -18M904 196q5 -24 -10 -44M2003 19q15 -16 34 -27M888 64q9 -5 13 -14M2181 202q-6 -9 -3 -19M1187 121q10 -7 20 -13M120 188q28 0 47 -19M1911 14q-8 -20 2 -40" stroke="#d2e872" stroke-width="2" stroke-opacity="0.38"/>
   <path d="M953 -55q-2 -20 14 -31M1033 140q-17 -20 -15 -46M1098 -14q1 -14 12 -23M1227 112q5 -12 6 -26M1191 125q16 -20 25 -44M1162 41q-7 -13 1 -26M1103 -8q12 -27 -5 -52M1247 42q-4 -17 -4 -34M917 -7q-0 -29 26 -41M1141 -13q-4 -19 1 -39M1038 -31q2 -21 11 -41M1199 -3q-19 -12 -19 -35M1207 68q-3 -15 6 -28M1060 -70q2 -26 -21 -39M1037 146q-13 -17 -16 -39M932 27q10 -11 4 -25M1216 7q16 -8 14 -27M1043 -30q1 -12 11 -19M1165 -44q-4 -11 0 -21M1094 106q-10 -14 -19 -28M956 19q-3 -11 2 -21M1079 -72q-1 -16 9 -27M951 129q13 -7 13 -21M1111 158q-5 -17 -16 -30M1220 99q2 -20 18 -33M1284 1q-4 -22 -15 -40M1231 47q-12 -19 -10 -42M1302 80q-10 -7 -10 -19M1305 80q6 -9 9 -20M1113 99q-8 -31 18 -49M1229 108q12 -26 -3 -51M937 81q-2 -17 -15 -28M1066 46q7 -8 11 -18M1075 128q5 -20 18 -37M1208 46q0 -11 -8 -19M881 50q-10 -14 -11 -31M952 37q-0 -31 26 -47M1138 132q11 -18 3 -38M1263 -33q-8 -13 -12 -28M1223 -40q-2 -28 19 -47M1077 1q-4 -20 -18 -34M1102 37q-13 -23 1 -45M958 123q5 -19 -10 -31M1141 82q16 -17 9 -40M1064 139q-1 -17 -13 -28M1134 26q-6 -11 -8 -24M1158 -48q9 -8 10 -21M1019 58q-11 -15 -5 -32M1033 145q-6 -12 -5 -26M1238 112q-23 -14 -25 -41M1120 39q-4 -21 -20 -34M1153 82q7 -24 -7 -46M985 143q7 -18 -4 -34M1178 -6q5 -13 6 -27M1032 16q3 -24 13 -47M1099 86q16 -18 7 -41M1139 -43q0 -14 -12 -19M1282 65q3 -16 15 -27M1268 107q1 -13 8 -24M1219 83q-16 -13 -21 -33M1092 -42q4 -11 13 -20M1267 88q10 -25 -9 -45M1262 93q1 -21 -9 -38M1105 41q-5 -11 -10 -23M1260 -19q5 -18 -7 -33M998 13q17 -10 19 -29M913 -42q-18 -19 -19 -46M1106 34q18 -17 17 -42M1022 123q-16 -23 -5 -49M1137 139q6 -17 -5 -30M1128 -71q16 -17 12 -40M1158 -6q-10 -24 -8 -51M1156 88q13 -21 -1 -41M1009 -60q1 -22 0 -45M1127 -20q11 -9 14 -23M1276 87q-2 -13 -13 -20M1084 -80q0 -25 -7 -49M856 35q9 -11 4 -25M1199 116q4 -15 4 -30M856 19q5 -30 -17 -52M983 86q-8 -23 -12 -46M972 101q5 -18 -5 -34M994 69q-10 -14 -0 -29M967 -11q20 -19 23 -47M1161 134q5 -19 17 -33M1059 158q10 -10 8 -25M982 56q-22 -13 -21 -38M1246 -37q19 -14 25 -38M927 -31q-0 -11 5 -21M1312 66q-15 -9 -18 -27M1297 84q27 -15 28 -47M1178 80q2 -27 23 -44M906 35q-5 -19 -2 -39M1197 121q3 -26 25 -39M945 -23q11 -17 15 -37M1005 7q-20 -14 -23 -38M932 118q-12 -20 -23 -39M860 -7q-8 -24 6 -45M1020 31q-7 -17 2 -32M1191 20q4 -11 6 -23M1269 36q-13 -27 -2 -54M1135 64q-19 -16 -11 -39M1050 112q2 -13 13 -21M977 24q-10 -14 -5 -31M1006 82q-0 -23 -21 -33M964 0q-5 -19 -2 -39M1254 -33q17 -12 16 -33M1126 157q-2 -13 -6 -24M1130 51q7 -13 15 -25M1256 -30q10 -16 10 -35" stroke="#5e9038" stroke-width="2" stroke-opacity="0.28"/>
   <path d="M944 51q1 -20 -5 -39M1255 -23q-10 -14 -20 -28M1255 34q15 -21 21 -46M1271 46q-22 -23 -11 -53M1214 64q18 -10 20 -31M1066 97q9 -34 -16 -58M1025 118q-1 -24 -22 -37M1047 73q-3 -18 -0 -37M1002 62q-6 -24 -23 -43M905 134q-12 -29 -30 -56M1191 -35q-11 -28 -5 -58M1236 17q10 -14 8 -30M1140 -78q20 -23 11 -53M1330 41q-11 -36 15 -63M1132 -82q4 -16 4 -33M1271 -8q-20 -26 -30 -56M1059 45q-1 -25 -6 -50M1142 155q9 -22 4 -45M944 -12q1 -32 -2 -64M826 18q17 -18 27 -40M1149 -74q7 -25 2 -50M1003 94q1 -32 30 -45M1172 160q3 -17 2 -35M986 5q5 -18 6 -37M976 8q18 -22 31 -47M1202 -9q-12 -14 -12 -32M917 23q7 -26 25 -47M994 127q-18 -15 -18 -39M995 79q-10 -31 4 -60M883 48q1 -18 -12 -30M915 -18q7 -30 -10 -56M1000 -56q-12 -15 -13 -34M1000 18q15 -19 5 -42M1333 23q-26 -21 -31 -55M1208 128q-8 -26 -1 -52M997 -31q-6 -13 -3 -28M1290 90q1 -35 -29 -55M1120 -87q4 -28 21 -50M1165 46q-8 -20 -21 -36M998 -24q13 -29 2 -59M1003 -39q-19 -17 -18 -43M1239 124q4 -13 -4 -25M960 47q9 -21 1 -42M1081 -8q7 -18 7 -37M1125 4q-5 -18 7 -32M1109 96q2 -22 20 -35M1014 67q16 -26 8 -56M1144 22q6 -20 0 -40M1039 90q8 -20 13 -41M1181 -71q13 -20 4 -42M1307 7q-20 -25 -21 -57M1061 -58q10 -31 -11 -56M1232 84q-17 -26 -4 -54M895 111q-0 -15 13 -24M1278 -43q-12 -9 -11 -24M1259 85q-13 -27 -31 -50M1219 43q21 -19 25 -48M989 57q-3 -32 18 -55M950 70q-2 -28 7 -55M1026 1q10 -18 20 -36M1326 17q18 -22 22 -50M1213 85q5 -23 1 -46M870 105q-3 -31 -1 -62M1194 -42q8 -16 13 -33M984 -30q-20 -18 -28 -45M1187 17q-13 -28 -6 -59M1069 10q-1 -16 5 -31M1223 -53q5 -32 2 -65M1063 127q-3 -29 -4 -58M1195 133q7 -23 -12 -39M1063 -30q-0 -18 -9 -33M946 -41q11 -15 13 -33M953 135q8 -18 4 -37M1254 -14q3 -20 -4 -39M1047 36q9 -18 -3 -33M1023 52q7 -13 8 -29M1309 7q-16 -24 -17 -53M1171 80q18 -25 16 -55M1320 85q10 -21 21 -41M1003 97q-14 -25 -4 -52M1156 74q-4 -16 -15 -29M894 -4q-1 -27 -6 -53M1157 29q-3 -22 14 -35M1192 106q-11 -21 -13 -45M958 10q16 -25 32 -51M949 110q1 -20 8 -38M1102 111q-18 -13 -16 -36M961 -64q-1 -15 -10 -28M916 -41q3 -23 -12 -40M1209 64q-5 -16 4 -31M1094 58q11 -14 10 -32M1019 54q12 -26 -8 -48M1177 -12q5 -30 1 -59M1221 82q-2 -22 -1 -45M921 48q3 -13 -0 -26M1051 57q-29 -21 -29 -56M1232 72q-3 -14 5 -27M860 50q22 -27 13 -61M1181 -55q14 -32 -7 -59M1192 102q4 -22 -14 -36M1268 24q-15 -28 1 -55M924 -48q-4 -22 -11 -44M1039 79q7 -18 2 -37M1029 -43q-14 -28 -16 -59M1013 48q-8 -29 16 -46M929 114q-6 -16 2 -31M929 -46q-4 -24 16 -38M1075 -74q-1 -13 2 -26M1186 -77q-11 -22 5 -41M869 33q-6 -15 -5 -31M1198 -18q18 -28 2 -56M976 -25q-4 -18 -13 -33M999 -66q-11 -24 -28 -44M1160 144q-9 -14 -18 -28M978 68q7 -32 30 -55M1023 -3q-23 -17 -26 -45M1205 101q15 -30 -4 -58M1009 18q-6 -16 -11 -32M960 -46q4 -28 -7 -53M1021 37q-14 -12 -8 -30M1063 107q4 -27 25 -46M1259 77q-15 -26 -26 -54M1286 101q-8 -21 6 -38M1028 158q-9 -14 -2 -29M862 79q2 -19 18 -29M1155 62q12 -9 8 -24M934 56q-4 -21 -14 -39M1230 49q-3 -19 12 -30M924 142q-5 -14 1 -28M1251 70q5 -28 -16 -48M1000 67q19 -14 20 -38M1129 122q-2 -17 -2 -33M1199 -70q-11 -20 1 -39M1107 101q-1 -21 -8 -41M931 1q3 -32 13 -64M1198 137q15 -35 -9 -64M1099 19q3 -37 -30 -55M1072 111q-2 -24 -24 -34M972 153q12 -12 15 -29M973 45q21 -17 27 -43M964 22q1 -21 -11 -37M969 -63q-9 -20 4 -37M900 108q0 -32 -29 -44M1276 7q3 -15 7 -31M1093 51q-14 -15 -16 -36M1061 141q-3 -30 14 -56M888 48q-4 -27 18 -43M926 110q-5 -23 -24 -36M1045 -2q-8 -13 -2 -27M982 -26q-7 -29 6 -57" stroke="#b4dc80" stroke-width="1.8" stroke-opacity="0.42"/>
  </g>
 </svg>
 <div class="t" style="left:1039.1px;top:1209.6px;font-size:25.5px;line-height:25.5px;transform:scaleX(0.9670);color:rgba(118,112,150,0.82);">HRM: Love Leads</div>
<div class="w1" style="left:242.0px;top:289.2px;transform:scaleX(0.9700)">Covid</div>
<div class="w1" style="left:476.4px;top:289.2px;transform:scaleX(0.9768)">is</div>
<div class="w1" style="left:575.1px;top:289.2px;transform:scaleX(0.7927)">a</div>
<div class="w1" style="left:659.0px;top:289.2px;transform:scaleX(0.9693)">passing</div>
<div class="w1" style="left:959.1px;top:289.2px;transform:scaleX(1.0249)">phenomena,</div>
<div class="w1" style="left:1442.8px;top:289.2px;transform:scaleX(0.9014)">as</div>
<div class="w1" style="left:1563.5px;top:289.2px;transform:scaleX(0.9561)">was</div>
<div class="w1" style="left:1739.1px;top:289.2px;transform:scaleX(1.0605)">the</div>
<div class="w1" style="left:1897.6px;top:289.2px;transform:scaleX(0.9783)">1910s</div>
<div class="w1" style="left:217.0px;top:382.2px;transform:scaleX(0.9921)">influenza</div>
<div class="w1" style="left:240.9px;top:497.6px;transform:scaleX(0.9846)">Pandemic</div>
<div class="w1" style="left:601.3px;top:497.6px;transform:scaleX(0.8830)">as</div>
<div class="w1" style="left:694.9px;top:497.6px;transform:scaleX(1.0711)">the</div>
<div class="w1" style="left:828.4px;top:497.6px;transform:scaleX(0.9938)">catalyst</div>
<div class="w1" style="left:1110.6px;top:497.6px;transform:scaleX(1.0978)">for</div>
<div class="w1" style="left:1227.0px;top:497.6px;transform:scaleX(0.9892)">change-</div>
<div class="w2" style="left:320.3px;top:601.1px;transform:scaleX(0.9043)">A</div>
<div class="w2" style="left:399.4px;top:601.1px;transform:scaleX(0.9909)">chance</div>
<div class="w2" style="left:653.0px;top:601.1px;transform:scaleX(1.0888)">for</div>
<div class="w2" style="left:774.2px;top:601.1px;transform:scaleX(0.9891)">us</div>
<div class="w2" style="left:879.7px;top:601.1px;transform:scaleX(1.1665)">to</div>
<div class="w2" style="left:981.4px;top:601.1px;transform:scaleX(1.0168)">step</div>
<div class="w2" style="left:1145.5px;top:601.1px;transform:scaleX(0.9827)">back</div>
<div class="w2" style="left:1325.9px;top:601.1px;transform:scaleX(1.0127)">and</div>
<div class="w2" style="left:1475.9px;top:601.1px;transform:scaleX(1.0681)">introspect,</div>
<div class="w2" style="left:1842.6px;top:601.1px;transform:scaleX(1.0581)">how</div>
<div class="w2" style="left:2015.2px;top:601.1px;transform:scaleX(1.0199)">we</div>
<div class="w2" style="left:302.1px;top:683.0px;transform:scaleX(1.0617)">might</div>
<div class="w2" style="left:498.6px;top:683.0px;transform:scaleX(1.0701)">think</div>
<div class="w2" style="left:673.1px;top:683.0px;transform:scaleX(1.0779)">differently</div>
<div class="w2" style="left:1009.2px;top:683.0px;transform:scaleX(1.0071)">and</div>
<div class="w2" style="left:1142.3px;top:683.0px;transform:scaleX(1.0259)">be</div>
<div class="w2" style="left:1238.8px;top:683.0px;transform:scaleX(0.9948)">socially</div>
<div class="w2" style="left:1479.1px;top:683.0px;transform:scaleX(1.0216)">responsible</div>
<div class="w2" style="left:318.7px;top:776.4px;transform:scaleX(1.0322)">Globally,</div>
<div class="w2" style="left:600.7px;top:776.4px;transform:scaleX(1.0523)">how</div>
<div class="w2" style="left:753.6px;top:776.4px;transform:scaleX(0.9786)">can</div>
<div class="w2" style="left:882.0px;top:776.4px;transform:scaleX(0.9940)">we</div>
<div class="w2" style="left:987.4px;top:776.4px;transform:scaleX(1.0197)">create</div>
<div class="w2" style="left:1195.0px;top:776.4px;transform:scaleX(1.1032)">better</div>
<div class="w2" style="left:1408.3px;top:776.4px;transform:scaleX(1.0665)">world</div>
<div class="tt" style="left:446.9px;top:108.3px;transform:scaleX(0.9326)">From</div>
<div class="tt" style="left:681.2px;top:108.3px;transform:scaleX(0.9073)">an</div>
<div class="tt" style="left:795.3px;top:108.3px;transform:scaleX(0.9326)">Apr’21</div>
<div class="tt" style="left:1094.5px;top:108.3px;transform:scaleX(0.9218)">Global</div>
<div class="tt" style="left:1370.8px;top:108.3px;transform:scaleX(0.9455)">Conference</div>
<svg class="a" style="left:181px;top:294px;overflow:visible" width="53.5" height="61" viewBox="0 0 53.5 61"><path d="M0 0 L53.5 30.5 L18.0 30.5 Z" fill="none" stroke="#0600f0" stroke-width="2" stroke-linejoin="miter"/><path d="M18.0 30.5 L53.5 30.5 L0 61 Z" fill="#0600f0"/></svg>
<svg class="a" style="left:181px;top:502px;overflow:visible" width="53.5" height="61" viewBox="0 0 53.5 61"><path d="M0 0 L53.5 30.5 L18.0 30.5 Z" fill="none" stroke="#0600f0" stroke-width="2" stroke-linejoin="miter"/><path d="M18.0 30.5 L53.5 30.5 L0 61 Z" fill="#0600f0"/></svg>
<svg class="a" style="left:265.5px;top:604.5px;overflow:visible" width="46.5" height="54" viewBox="0 0 46.5 54"><path d="M0 0 L46.5 27.0 L15.6 27.0 Z" fill="none" stroke="#0600f0" stroke-width="2" stroke-linejoin="miter"/><path d="M15.6 27.0 L46.5 27.0 L0 54 Z" fill="#0600f0"/></svg>
<svg class="a" style="left:266px;top:780.5px;overflow:visible" width="46.5" height="54" viewBox="0 0 46.5 54"><path d="M0 0 L46.5 27.0 L15.6 27.0 Z" fill="none" stroke="#0600f0" stroke-width="2" stroke-linejoin="miter"/><path d="M15.6 27.0 L46.5 27.0 L0 54 Z" fill="#0600f0"/></svg>
</div>
<div class="a" id="slidebot"></div>

<!-- VIDEO -->
<div class="a" id="video" style="left:2295px;top:736px;width:584px;height:328px;overflow:hidden;background:#a8aca0;">
 <svg class="a" style="left:0;top:0" width="584" height="328" viewBox="0 0 584 328">
  <defs>
   <filter id="vb" x="-5%" y="-5%" width="110%" height="110%"><feGaussianBlur stdDeviation="2.4"/></filter>
   <linearGradient id="lc" x1="0" x2="1" y1="0" y2="0">
    <stop offset="0" stop-color="#8e6a5c"/><stop offset="0.06" stop-color="#a87868"/><stop offset="0.13" stop-color="#bb8674"/>
    <stop offset="0.26" stop-color="#c08a78"/><stop offset="0.36" stop-color="#a0685a"/><stop offset="0.42" stop-color="#7a4c40"/>
    <stop offset="0.44" stop-color="#d49a88"/><stop offset="0.465" stop-color="#8e5a4a"/><stop offset="0.57" stop-color="#b87060"/>
    <stop offset="0.7" stop-color="#cc7a6a"/><stop offset="0.83" stop-color="#c27464"/><stop offset="0.94" stop-color="#b86a5c"/>
    <stop offset="0.985" stop-color="#d8a898"/><stop offset="1" stop-color="#f4f4fa"/>
   </linearGradient>
   <linearGradient id="rc" x1="0" x2="1" y1="0" y2="0">
    <stop offset="0" stop-color="#7a4a40"/><stop offset="0.16" stop-color="#8c4c42"/><stop offset="0.45" stop-color="#b45a52"/>
    <stop offset="0.68" stop-color="#d88880"/><stop offset="0.84" stop-color="#eaa8a4"/><stop offset="1" stop-color="#7c4840"/>
   </linearGradient>
   <linearGradient id="ow" x1="0" x2="0" y1="0" y2="1">
    <stop offset="0" stop-color="#a8b0ae"/><stop offset="0.1" stop-color="#9a9c84"/><stop offset="0.3" stop-color="#a4a48c"/>
    <stop offset="0.55" stop-color="#b6b8a4"/><stop offset="1" stop-color="#b8bcb0"/>
   </linearGradient>
   <linearGradient id="owr" x1="0" x2="1" y1="0" y2="0">
    <stop offset="0" stop-color="#c8c8b4" stop-opacity="0"/><stop offset="1" stop-color="#cdd0bc" stop-opacity="0.85"/>
   </linearGradient>
   <linearGradient id="sh" x1="0" x2="1" y1="0" y2="0">
    <stop offset="0" stop-color="#5e6c8e"/><stop offset="0.2" stop-color="#7080aa"/><stop offset="0.52" stop-color="#7486b2"/>
    <stop offset="0.555" stop-color="#82b2e8"/><stop offset="0.75" stop-color="#8cc0f4"/><stop offset="1" stop-color="#80b4ec"/>
   </linearGradient>
   <radialGradient id="fc" cx="0.5" cy="0.3" r="0.7">
    <stop offset="0" stop-color="#968a92"/><stop offset="0.45" stop-color="#7a6e6e"/><stop offset="1" stop-color="#564c4a"/>
   </radialGradient>
  </defs>
  <g filter="url(#vb)">
   <rect x="-5" y="-5" width="233" height="340" fill="url(#lc)"/>
   <rect x="222" y="-5" width="16" height="250" fill="#f2f4f8"/>
   <rect x="237" y="-5" width="86" height="340" fill="#b2ced0"/>
   <rect x="237" y="-5" width="40" height="340" fill="#c4dcdc"/>
   <rect x="316" y="-5" width="7" height="205" fill="#f0f0f4"/>
   <rect x="322" y="-5" width="62" height="205" fill="url(#rc)"/>
   <rect x="383" y="-5" width="206" height="340" fill="url(#ow)"/>
   <rect x="470" y="-5" width="119" height="340" fill="url(#owr)"/>
   <polygon points="412,4 422,4 440,162 404,162" fill="#7a4038"/>
   <polygon points="420,20 426,20 436,160 428,160" fill="#c07068"/>
   <rect x="405" y="20" width="4" height="140" fill="#ece4dc"/>
   <rect x="499" y="89" width="90" height="42" fill="#3a3232"/>
   <rect x="536" y="150" width="53" height="185" fill="#a8aeaa"/>
   <rect x="562" y="155" width="27" height="180" fill="#b4a68c"/>
   <rect x="562" y="155" width="5" height="180" fill="#8c8070"/>
   <rect x="385" y="159" width="128" height="32" fill="#323a44"/>
   <rect x="296" y="186" width="226" height="66" rx="3" fill="#34425a"/>
   <rect x="300" y="196" width="218" height="30" fill="#3c4c64"/>
   <rect x="333" y="247" width="204" height="19" fill="#9cacb2"/>
   <rect x="345" y="265" width="186" height="70" fill="#2c3438"/>
   <rect x="395" y="282" width="110" height="6" fill="#4a565a"/>
   <!-- shirt -->
   <path d="M-5 335 L10 310 Q40 245 95 222 L150 204 L240 188 Q280 196 292 214 Q325 262 352 335 Z" fill="url(#sh)"/>
   <path d="M131 228 L196 258" stroke="#4c5c80" stroke-width="6" opacity="0.7"/>
   <path d="M231 218 L256 228" stroke="#4c6ca0" stroke-width="6" opacity="0.6"/>
   <!-- neck -->
   <path d="M150 165 L246 160 L240 226 L201 250 L156 214 Z" fill="#544c48"/>
   <!-- hair -->
   <path d="M131 156 L131 118 Q134 64 190 61 Q246 62 249 120 L251 172 L236 168 L232 96 Q190 80 148 96 L146 158 Z" fill="#2a2c36"/>
   <!-- face -->
   <path d="M146 92 Q190 78 233 92 L238 150 Q238 188 198 196 Q156 192 150 160 Z" fill="url(#fc)"/>
   <!-- glasses -->
   <rect x="146" y="118" width="40" height="24" rx="4" fill="#7a7a6a" fill-opacity="0.35" stroke="#2c2a2c" stroke-width="3"/>
   <rect x="188" y="118" width="42" height="24" rx="4" fill="#7a7a6a" fill-opacity="0.35" stroke="#2c2a2c" stroke-width="3"/>
   <path d="M146 119 L230 119" stroke="#2a2828" stroke-width="3.5"/>
   <ellipse cx="190" cy="160" rx="9" ry="12" fill="#8a7e7c" opacity="0.45"/>
   <path d="M172 178 Q192 183 212 178" stroke="#4a3e3c" stroke-width="3" fill="none" opacity="0.5"/>
  </g>
 </svg>
 <!-- overlays -->
 <div class="a" style="left:11px;top:12px;width:164px;height:48px;border-radius:12px;background:rgba(60,44,54,0.86);"></div>
 <div class="t" style="left:27.1px;top:24.8px;font-size:25px;line-height:25px;transform:scaleX(0.9725);color:#fff;">Remove Pin</div>
 <div class="a" style="left:0;top:288px;width:339px;height:40px;background:rgba(26,32,44,0.92);"></div>
 <div class="a" style="left:1.2px;top:312px;width:3.8px;height:7.5px;background:#f4f4f4;border-radius:1px;"></div>
 <div class="a" style="left:9.3px;top:306.5px;width:4.3px;height:13px;background:#f4f4f4;border-radius:1px;"></div>
 <div class="a" style="left:17.3px;top:301px;width:3.7px;height:18.5px;background:#f4f4f4;border-radius:1px;"></div>
 <div class="a" style="left:25.4px;top:296px;width:3.7px;height:23.5px;background:#f4f4f4;border-radius:1px;"></div>
 <svg class="a" style="left:37px;top:294px" width="20" height="28" viewBox="0 0 20 28">
  <path d="M3 1 L16 1 L16 3 L14 3 L14 10 Q18 12.5 18.5 17 L1.5 17 Q2 12.5 6 10 L6 3 L3 3 Z" fill="#f4f4f4"/>
  <rect x="9" y="17" width="2" height="10" fill="#f4f4f4"/>
 </svg>
 <div class="t" style="left:69.8px;top:295.1px;font-size:25px;line-height:25px;transform:scaleX(1.0128);color:#fff;">Dr. Nishant Khandelwal</div>
</div>
<!-- splitter handle -->
<div class="a" style="left:2282px;top:874px;width:2px;height:52px;background:#e8e8e8;"></div>
<div class="a" style="left:2288px;top:874px;width:2px;height:52px;background:#e8e8e8;"></div>

<!-- TOOLBAR -->
<div class="a" id="toolbar"></div>
<!-- mic -->
<svg class="a" style="left:60px;top:1700px;overflow:visible" width="60" height="60" viewBox="0 0 60 60">
  <rect x="23.9" y="6.7" width="16.4" height="30.6" rx="8.2" fill="#ababab"/>
  <path d="M19.2 28 C19.2 37 24.5 42.8 32.2 42.8 C39.9 42.8 44.5 37 44.5 28" stroke="#ababab" stroke-width="3" fill="none" stroke-linecap="round"/>
  <line x1="32.2" y1="42.8" x2="32.2" y2="48" stroke="#ababab" stroke-width="3"/>
  <line x1="25.7" y1="49.5" x2="38.3" y2="49.5" stroke="#ababab" stroke-width="3" stroke-linecap="round"/>
  <line x1="9.7" y1="51.1" x2="54.4" y2="6.7" stroke="#1a1a1a" stroke-width="7"/>
  <line x1="9.7" y1="51.1" x2="54.4" y2="6.7" stroke="#ec6d6b" stroke-width="3.2" stroke-linecap="round"/>
</svg>
<svg class="a" style="left:146px;top:1723px" width="20" height="14" viewBox="0 0 20 14"><path d="M2.6 10.7 L9.9 3 L17.2 10.7" stroke="#ababab" stroke-width="3" fill="none"/></svg>
<div class="t lbl" style="left:46.6px;top:1761.1px;font-size:26px;line-height:26px;transform:scaleX(0.9811)">Unmute</div>
<!-- video -->
<svg class="a" style="left:240px;top:1700px;overflow:visible" width="60" height="60" viewBox="0 0 60 60">
  <rect x="6" y="14.7" width="34.2" height="28.4" rx="6.5" fill="#ababab"/>
  <path d="M43.1 24 L52 17.5 Q54 16.3 54 18.5 L54 40 Q54 42.3 52 41 L43.1 34.4 Z" fill="#ababab"/>
  <line x1="7.8" y1="51.8" x2="52.5" y2="6.6" stroke="#1a1a1a" stroke-width="7"/>
  <line x1="7.8" y1="51.8" x2="52.5" y2="6.6" stroke="#ec6d6b" stroke-width="3.2" stroke-linecap="round"/>
</svg>
<svg class="a" style="left:325px;top:1723px" width="20" height="14" viewBox="0 0 20 14"><path d="M2.6 10.7 L9.9 3 L17.2 10.7" stroke="#ababab" stroke-width="3" fill="none"/></svg>
<div class="t lbl" style="left:205.9px;top:1761.1px;font-size:26px;line-height:26px;transform:scaleX(0.9890)">Start Video</div>
<!-- security -->
<svg class="a" style="left:928px;top:1707px;overflow:visible" width="40" height="44" viewBox="0 0 40 44">
  <path d="M20.2 2 C24.5 5.5 29 8.5 36.5 10.2 L36.5 20 C36.5 30.5 30 37.5 20.2 42 C10.5 37.5 3.5 30.5 3.5 20 L3.5 10.2 C11.5 8.5 16 5.5 20.2 2 Z" stroke="#ababab" stroke-width="3" fill="none" stroke-linejoin="round"/>
  <path d="M20.2 2 C16 5.5 11.5 8.5 3.5 10.2 L3.5 21.7 L20.2 21.7 Z" fill="#ababab"/>
  <path d="M20.2 21.7 L36.5 21.7 C36 31 30 37.5 20.2 42 Z" fill="#ababab"/>
</svg>
<div class="t lbl" style="left:900.9px;top:1761.0px;font-size:26px;line-height:26px;transform:scaleX(0.9901)">Security</div>
<!-- participants -->
<div class="a" style="left:1108px;top:1711px;width:12px;height:12px;border-radius:50%;background:#ea6262;"></div>
<svg class="a" style="left:1120px;top:1710px;overflow:visible" width="52" height="40" viewBox="0 0 52 40">
  <circle cx="17" cy="10" r="8.1" fill="#ababab"/>
  <circle cx="36.4" cy="13.4" r="7.6" fill="#ababab"/>
  <path d="M34 37 L50.1 37 Q50.1 27 38 25.2 Q33.5 25 31 26.5 Q34.5 31 34 37 Z" fill="#ababab"/>
  <path d="M1.8 33.5 Q1.8 22 17 21.9 Q32.2 22 32.2 33.5 Q32.2 37 28.5 37 L5.5 37 Q1.8 37 1.8 33.5 Z" fill="#ababab" stroke="#1a1a1a" stroke-width="0"/>
</svg>
<div class="t lbl" style="left:1175.8px;top:1717.1px;font-size:24px;line-height:24px;transform:scaleX(0.9823)">75</div>
<svg class="a" style="left:1228px;top:1723px" width="20" height="14" viewBox="0 0 20 14"><path d="M2.6 10.9 L10 2.6 L17.5 10.9" stroke="#ababab" stroke-width="3" fill="none"/></svg>
<div class="t lbl" style="left:1077.8px;top:1761.0px;font-size:26px;line-height:26px;transform:scaleX(0.9885)">Participants</div>
<!-- chat -->
<svg class="a" style="left:1320px;top:1707px;overflow:visible" width="50" height="44" viewBox="0 0 50 44">
  <path d="M12 3.7 L36 3.7 Q44 3.7 44 11.7 L44 24 Q44 32 36 32 L22.3 32 L12.4 40.2 L11.7 32 Q3.9 32 3.9 24 L3.9 11.7 Q3.9 3.7 12 3.7 Z" fill="#ababab"/>
</svg>
<div class="t lbl" style="left:1317.0px;top:1761.0px;font-size:26px;line-height:26px;transform:scaleX(0.9452)">Chat</div>
<!-- share -->
<div class="a" style="left:1494px;top:1711px;width:48px;height:36px;border-radius:6px;background:#6cd86c;"></div>
<svg class="a" style="left:1494px;top:1711px" width="48" height="36" viewBox="0 0 48 36">
  <path d="M24 10 L24 26.4 M17.1 16.7 L24 9.7 L30.9 16.7" stroke="#1c1c1c" stroke-width="3.4" fill="none" stroke-linecap="round" stroke-linejoin="round"/>
</svg>
<svg class="a" style="left:1576px;top:1724px" width="20" height="14" viewBox="0 0 20 14"><path d="M2.8 10.4 L9.9 3 L17.3 10.4" stroke="#6cd86c" stroke-width="3" fill="none"/></svg>
<div class="t lbl" style="left:1442.5px;top:1761.2px;font-size:26px;line-height:26px;transform:scaleX(0.9481);color:#6cd86c">Share Screen</div>
<!-- pause/stop -->
<div class="a" style="left:1705px;top:1709px;width:40px;height:40px;border-radius:5px;background:#ababab;"></div>
<div class="a" style="left:1717px;top:1721px;width:4px;height:16px;border-radius:1.5px;background:#1a1a1a;"></div>
<div class="a" style="left:1729px;top:1721px;width:4px;height:16px;border-radius:1.5px;background:#1a1a1a;"></div>
<div class="a" style="left:1761px;top:1709px;width:40px;height:40px;border-radius:5px;background:#ababab;"></div>
<div class="a" style="left:1773px;top:1721px;width:16px;height:16px;border-radius:2.5px;background:#1a1a1a;"></div>
<div class="t lbl" style="left:1627.1px;top:1761.0px;font-size:26px;line-height:26px;transform:scaleX(0.9661)">Pause/Stop Recording</div>
<!-- reactions -->
<svg class="a" style="left:1950px;top:1700px;overflow:visible" width="60" height="50" viewBox="0 0 60 50">
  <defs><mask id="bite"><rect x="0" y="0" width="60" height="50" fill="#fff"/><circle cx="42.4" cy="12.7" r="10" fill="#000"/></mask></defs>
  <circle cx="26" cy="29" r="18" fill="#ababab" mask="url(#bite)"/>
  <circle cx="21.2" cy="26.5" r="2.2" fill="#1a1a1a"/>
  <circle cx="30.9" cy="26.5" r="2.2" fill="#1a1a1a"/>
  <path d="M19 32.3 Q26.2 40 33.6 32.3" stroke="#1a1a1a" stroke-width="3" fill="none" stroke-linecap="round"/>
  <path d="M42.4 5.5 L42.4 19.5 M35.4 12.7 L49.5 12.7" stroke="#ababab" stroke-width="3"/>
</svg>
<div class="t lbl" style="left:1918.8px;top:1761.0px;font-size:26px;line-height:26px;transform:scaleX(0.9682)">Reactions</div>
<!-- apps -->
<svg class="a" style="left:2115px;top:1705px;overflow:visible" width="50" height="50" viewBox="0 0 50 50">
  <path d="M9.3 24.7 L9.3 16 Q9.3 9.8 15.5 9.8 L23.8 9.8" stroke="#ababab" stroke-width="3" fill="none" stroke-linecap="round"/>
  <path d="M37.2 23.2 L37.2 32 Q37.2 38.1 31 38.1 L22.4 38.1" stroke="#ababab" stroke-width="3" fill="none" stroke-linecap="round"/>
  <circle cx="33" cy="14" r="4.5" stroke="#ababab" stroke-width="3" fill="none"/>
  <circle cx="12.9" cy="34.1" r="4.5" stroke="#ababab" stroke-width="3" fill="none"/>
</svg>
<div class="t lbl" style="left:2109.0px;top:1761.0px;font-size:26px;line-height:26px;transform:scaleX(0.9618)">Apps</div>
<!-- end -->
<div class="a" style="left:2728px;top:1719px;width:128px;height:56px;border-radius:13px;background:#ab3431;"></div>
<div class="t" style="left:2769.5px;top:1733.3px;font-size:28px;line-height:28px;transform:scaleX(0.9059);font-weight:bold;color:#fff">End</div>

</body></html>
